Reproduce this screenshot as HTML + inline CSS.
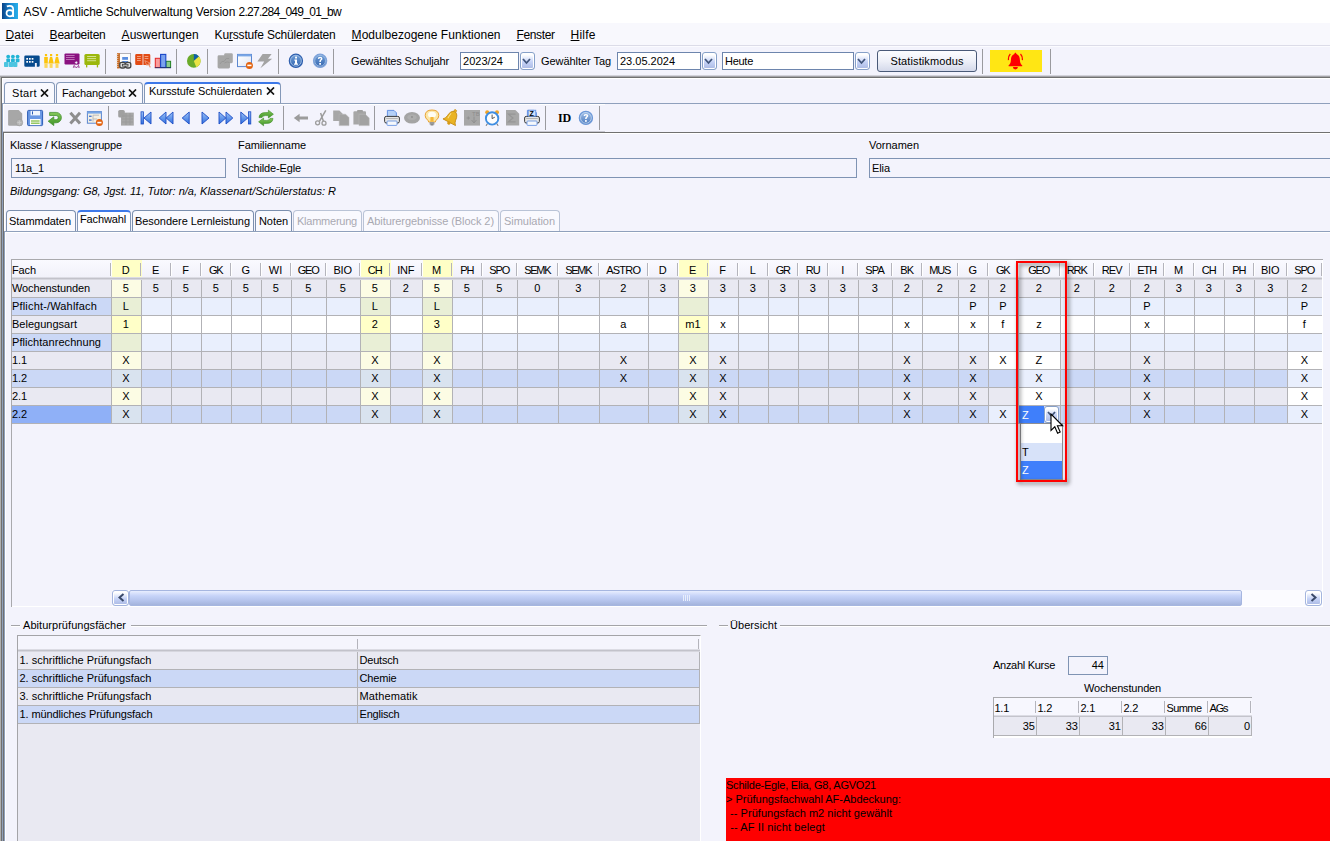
<!DOCTYPE html>
<html lang="de"><head><meta charset="utf-8"><title>ASV - Amtliche Schulverwaltung</title>
<style>

html,body{margin:0;padding:0}
body{width:1330px;height:841px;overflow:hidden;position:relative;background:#f3f3fc;font-family:"Liberation Sans",sans-serif;font-size:11px;color:#000}
div,span.t,svg{position:absolute;box-sizing:border-box}
span.t{white-space:pre;line-height:16px;height:16px}
.tab{border:1px solid #8498b8;border-bottom:none;border-radius:4px 4px 0 0;background:#f9f9fe}
.fld{border:1px solid #7f93b3;background:#f3f3fc}
.cb{border:1px solid #6d85ad;background:#fff}
.cbb{border:1px solid #86a0c8;border-radius:3px;background:linear-gradient(#fff 12%,#c6d3f7 55%,#aab9e3);box-shadow:inset 0 0 0 1px #fff}
.sep{width:1px;background:#9a9a9e}
</style></head>
<body>
<div style="left:0px;top:0px;width:1330px;height:23px;background:#fff"></div>
<svg style="left:2px;top:3px" width="16" height="16" viewBox="0 0 16 16"><defs><linearGradient id="lg0" x1="0" y1="0" x2="1" y2="0"><stop offset="0" stop-color="#0a4488"/><stop offset="0.55" stop-color="#1b8ad2"/><stop offset="1" stop-color="#27b0ea"/></linearGradient></defs><rect width="16" height="16" fill="url(#lg0)"/><path d="M4.8 3.4 Q6 2.9 7.8 2.9 Q11.2 2.9 11.2 6.4 V13.9" fill="none" stroke="#fff" stroke-width="1.7"/><ellipse cx="7.8" cy="10.3" rx="3.3" ry="3.1" fill="none" stroke="#fff" stroke-width="1.7"/></svg>
<span class="t" style="left:23.5px;top:3.84px;font-size:12px;letter-spacing:-0.080px;">ASV - Amtliche Schulverwaltung Version </span>
<span class="t" style="left:238.5px;top:3.84px;font-size:12px;letter-spacing:-0.720px;">2.27.284_049_01_bw</span>
<div style="left:0px;top:23px;width:1330px;height:23px;background:#f8f8fd"></div>
<span class="t" style="left:5.6px;top:26.84px;font-size:12px;letter-spacing:-0.006px;"><u>D</u>atei</span>
<span class="t" style="left:49.6px;top:26.84px;font-size:12px;letter-spacing:-0.206px;"><u>B</u>earbeiten</span>
<span class="t" style="left:121.6px;top:26.84px;font-size:12px;letter-spacing:0.022px;"><u>A</u>uswertungen</span>
<span class="t" style="left:214.6px;top:26.84px;font-size:12px;letter-spacing:-0.171px;">Ku<u>r</u>sstufe Schülerdaten</span>
<span class="t" style="left:351.6px;top:26.84px;font-size:12px;letter-spacing:0.036px;"><u>M</u>odulbezogene Funktionen</span>
<span class="t" style="left:516.6px;top:26.84px;font-size:12px;letter-spacing:-0.386px;"><u>F</u>enster</span>
<span class="t" style="left:570.6px;top:26.84px;font-size:12px;letter-spacing:0.197px;"><u>H</u>ilfe</span>
<div style="left:0px;top:46px;width:1330px;height:29px;background:#f3f3fc;border-top:1px solid #fbfbff"></div>
<div style="left:0px;top:45px;width:1330px;height:1px;background:#dcdce8"></div>
<div style="left:0px;top:75px;width:1330px;height:1px;background:#d2d2da"></div>
<div style="left:0px;top:76px;width:1330px;height:1px;background:#a4a4a8"></div>
<div style="left:0px;top:77px;width:1330px;height:764px;background:#f3f3fc"></div>
<div style="left:0px;top:77px;width:1px;height:764px;background:#b0b0b0"></div>
<div style="left:1px;top:77px;width:1329px;height:1px;background:#707070"></div>
<div style="left:1px;top:77px;width:1px;height:764px;background:#707070"></div>
<div style="left:2px;top:78px;width:1328px;height:1px;background:#fff"></div>
<div style="left:2px;top:78px;width:1px;height:25px;background:#fff"></div>
<div class="sep" style="left:105px;top:49px;height:25px"></div>
<div class="sep" style="left:176px;top:49px;height:25px"></div>
<div class="sep" style="left:207px;top:49px;height:25px"></div>
<div class="sep" style="left:278px;top:49px;height:25px"></div>
<div class="sep" style="left:333px;top:49px;height:25px"></div>
<div class="sep" style="left:982px;top:49px;height:25px"></div>
<div class="sep" style="left:1050px;top:49px;height:25px"></div>
<span class="t" style="left:351px;top:53.19px;font-size:11px;letter-spacing:-0.152px;">Gewähltes Schuljahr</span>
<span class="t" style="left:541px;top:53.19px;font-size:11px;letter-spacing:-0.056px;">Gewählter Tag</span>
<div class="cb" style="left:460px;top:52px;width:59px;height:18px"></div>
<div class="cbb" style="left:520px;top:52px;width:15px;height:18px"></div>
<svg style="left:522px;top:58px" width="9" height="7" viewBox="0 0 9 7"><path d="M1 1 L4.5 5 L8 1" fill="none" stroke="#41557a" stroke-width="1.8"/></svg>
<span class="t" style="left:463px;top:53.19px;font-size:11px;letter-spacing:0.033px;">2023/24</span>
<div class="cb" style="left:617px;top:52px;width:84px;height:18px"></div>
<div class="cbb" style="left:702px;top:52px;width:15px;height:18px"></div>
<svg style="left:704px;top:58px" width="9" height="7" viewBox="0 0 9 7"><path d="M1 1 L4.5 5 L8 1" fill="none" stroke="#41557a" stroke-width="1.8"/></svg>
<span class="t" style="left:620px;top:53.19px;font-size:11px;letter-spacing:-0.006px;">23.05.2024</span>
<div class="cb" style="left:722px;top:52px;width:132px;height:18px"></div>
<div class="cbb" style="left:855px;top:52px;width:15px;height:18px"></div>
<svg style="left:857px;top:58px" width="9" height="7" viewBox="0 0 9 7"><path d="M1 1 L4.5 5 L8 1" fill="none" stroke="#41557a" stroke-width="1.8"/></svg>
<span class="t" style="left:725px;top:53.19px;font-size:11px;letter-spacing:-0.272px;">Heute</span>
<div style="left:877px;top:50px;width:100px;height:22px;border:1px solid #4a5a78;border-radius:3px;background:linear-gradient(#fdfdff,#eef0f8 50%,#d4d9ea)"></div>
<span class="t" style="left:927px;top:53.19px;font-size:11px;letter-spacing:0.105px;transform:translateX(-50%);">Statistikmodus</span>
<div style="left:990px;top:50px;width:52px;height:22px;background:#ffe614"></div>
<svg style="left:1004px;top:50px" width="24" height="22" viewBox="1004 50 24 22"><path d="M1015.4 52.8 C1015.9 52.8 1016.3 53.3 1016.4 54 C1019 54.8 1019.8 57.5 1019.9 60 C1020 63 1020.8 64.2 1022.2 65.2 V66.3 H1008.6 V65.2 C1010 64.2 1010.8 63 1010.9 60 C1011 57.5 1011.8 54.8 1014.4 54 C1014.5 53.3 1014.9 52.8 1015.4 52.8 Z M1012.9 67.1 H1017.9 A2.5 2.3 0 0 1 1012.9 67.1 Z" fill="#fe0000"/><path d="M1010.3 54 Q1008 56.6 1008.5 60.2 M1020.5 54 Q1022.8 56.6 1022.3 60.2" fill="none" stroke="#fe0000" stroke-width="1.2"/></svg>
<svg style="left:0;top:46px" width="345" height="30" viewBox="0 46 345 30"><defs><linearGradient id="gi" x1="0" y1="0" x2="0" y2="1"><stop offset="0" stop-color="#6f9fd8"/><stop offset="1" stop-color="#3464ae"/></linearGradient><linearGradient id="gw" x1="0" y1="0" x2="1" y2="1"><stop offset="0" stop-color="#fff"/><stop offset="1" stop-color="#dfe6f4"/></linearGradient></defs><g fill="#22b4d6"><circle cx="8.2" cy="56.6" r="1.9"/><rect x="6.299999999999999" y="58.6" width="3.8" height="3.6" rx="1"/><circle cx="12.9" cy="56.6" r="1.9"/><rect x="11.0" y="58.6" width="3.8" height="3.6" rx="1"/><circle cx="17.6" cy="56.6" r="1.9"/><rect x="15.700000000000001" y="58.6" width="3.8" height="3.6" rx="1"/></g><g fill="#4cc4e0"><rect x="4.0" y="62" width="4.4" height="5" rx="0.8"/><rect x="8.8" y="62" width="4.4" height="5" rx="0.8"/><rect x="13.0" y="62" width="4.4" height="5" rx="0.8"/></g><path d="M25.6 55.4 H38.4 Q39.7 55.4 39.7 56.7 V65.4 Q39.7 66.7 38.4 66.7 H36.8 V63 H34.9 V66.7 H25.6 Q24.3 66.7 24.3 65.4 V56.7 Q24.3 55.4 25.6 55.4 Z" fill="#064a8e"/><rect x="26.3" y="58" width="1.7" height="1.7" fill="#fff"/><rect x="29" y="58" width="1.7" height="1.7" fill="#fff"/><rect x="31.7" y="58" width="1.7" height="1.7" fill="#fff"/><rect x="26.3" y="61" width="1.7" height="1.7" fill="#fff"/><rect x="29" y="61" width="1.7" height="1.7" fill="#fff"/><rect x="31.7" y="61" width="1.7" height="1.7" fill="#fff"/><g fill="#fcc40a"><rect x="44.9" y="54" width="2.2" height="2.2"/><rect x="50.0" y="54" width="2.2" height="2.2"/><rect x="55.9" y="54" width="2.2" height="2.2"/><rect x="44.2" y="57" width="3.6" height="6.5"/><path d="M50 57 H52.2 L53.8 63.6 H48.4 Z"/><path d="M55.9 57 H58.1 L59.7 63.6 H54.3 Z"/></g><g fill="#fbd65c"><rect x="44.4" y="63.5" width="3.2" height="4.4"/><rect x="49.6" y="63.6" width="3" height="4.3"/><rect x="55.5" y="63.6" width="3" height="4.3"/></g><rect x="64.5" y="53.4" width="15" height="11" rx="1.2" fill="#8a1180"/><rect x="66" y="55.15" width="8.6" height="0.8" fill="#c98bc4"/><rect x="66" y="57.15" width="8.6" height="0.8" fill="#c98bc4"/><rect x="66" y="59.15" width="8.6" height="0.8" fill="#c98bc4"/><circle cx="76.3" cy="62.6" r="1.6" fill="#f3f3fc" stroke="#8a1180" stroke-width="0.9"/><path d="M74.6 64.5 L73.3 67.4 L75.3 66.6 L76.3 68 L77.2 66.6 L79.3 67.4 L78 64.5" fill="none" stroke="#9a3a92" stroke-width="0.9"/><rect x="84.4" y="53.9" width="15.3" height="11" rx="1.5" fill="#9bb70c"/><rect x="86" y="64" width="1.3" height="3.4" fill="#9bb70c"/><rect x="96.8" y="64" width="1.3" height="3.4" fill="#9bb70c"/><rect x="87.1" y="56.1" width="9" height="0.9" fill="#dbe6a0"/><rect x="87.1" y="58.2" width="9" height="0.9" fill="#dbe6a0"/><rect x="87.1" y="60.300000000000004" width="9" height="0.9" fill="#dbe6a0"/><rect x="119.6" y="53.4" width="11" height="12.6" fill="#fdfdfd" stroke="#a0a0a8" stroke-width="0.8"/><rect x="117" y="53.2" width="2.8" height="15.2" fill="#c8641a"/><rect x="116.2" y="54.3" width="2.2" height="0.8" fill="#e8e0d8"/><rect x="116.2" y="56.3" width="2.2" height="0.8" fill="#e8e0d8"/><rect x="116.2" y="58.3" width="2.2" height="0.8" fill="#e8e0d8"/><rect x="116.2" y="60.3" width="2.2" height="0.8" fill="#e8e0d8"/><rect x="116.2" y="62.3" width="2.2" height="0.8" fill="#e8e0d8"/><rect x="116.2" y="64.3" width="2.2" height="0.8" fill="#e8e0d8"/><rect x="116.2" y="66.3" width="2.2" height="0.8" fill="#e8e0d8"/><rect x="122.2" y="57" width="5.8" height="2.8" fill="#5a8ee0"/><rect x="122.2" y="61" width="5.8" height="2" fill="#5a8ee0"/><rect x="119.8" y="62.4" width="5.6" height="5.6" rx="2" fill="#e4e4e4" stroke="#444" stroke-width="1.3"/><rect x="125.4" y="62.4" width="5.4" height="5.6" rx="2" fill="#e4e4e4" stroke="#444" stroke-width="1.3"/><rect x="122.4" y="64.3" width="5.6" height="1.8" fill="#eee" stroke="#444" stroke-width="0.9"/><path d="M136.5 54 H142.6 V65 H136.5 Q135.2 65 135.2 63.7 V55.3 Q135.2 54 136.5 54 Z M143.4 54 H149 Q150.3 54 150.3 55.3 V63.7 Q150.3 65 149 65 H143.4 Z" fill="#e24a14"/><rect x="137" y="56.0" width="3.8" height="0.9" fill="#f4a888"/><rect x="137" y="58.0" width="3.8" height="0.9" fill="#f4a888"/><rect x="137" y="60.0" width="3.8" height="0.9" fill="#f4a888"/><rect x="144.6" y="56.0" width="3.8" height="0.9" fill="#f4a888"/><rect x="144.6" y="58.0" width="3.8" height="0.9" fill="#f4a888"/><path d="M144.8 60.6 L147 66 L147.9 64.2 L150 67.6 L150.6 67 L148.7 63.6 L150.2 63.2 Z" fill="#e24a14" stroke="#f3d0c0" stroke-width="0.5"/><rect x="155.3" y="58.3" width="5" height="9.2" fill="#fa9c9c" stroke="#e22626" stroke-width="1"/><rect x="166" y="61.3" width="4.6" height="6.2" fill="#8ccc8c" stroke="#238223" stroke-width="1"/><rect x="160.6" y="54.4" width="5.2" height="13.1" fill="#7aa2ee" stroke="#1846c8" stroke-width="1.1"/><rect x="154.8" y="67.3" width="16.2" height="0.9" fill="#222a6a"/><circle cx="193.8" cy="60.9" r="6.8" fill="#6aaa2a"/><path d="M193.8 60.9 L193.8 54.1 A6.8 6.8 0 0 1 198.9 56.4 Z" fill="#0e5fa8"/><path d="M193.8 60.9 L198.9 56.4 A6.8 6.8 0 0 1 196.3 67.2 Z" fill="#e9e244"/><rect x="224.2" y="53.2" width="8.6" height="10" rx="1.4" fill="#a9a9a9"/><rect x="217.6" y="55.3" width="12.4" height="13.2" rx="1.4" fill="#a6a6a6"/><path d="M220 64 Q222 60 224 61.5 Q226 57 229 58.5 M224.5 63 Q227 61 229.5 62.5" fill="none" stroke="#969696" stroke-width="0.9"/><rect x="237.5" y="54.4" width="14" height="12.2" fill="url(#gw)" stroke="#5a86d0" stroke-width="1"/><rect x="237.5" y="54.4" width="14" height="2" fill="#78a6e6"/><circle cx="249.4" cy="65.4" r="3.5" fill="#e2620e"/><rect x="247.3" y="64.6" width="4.2" height="1.6" fill="#fff"/><path d="M262.6 54 H271.6 L268 58.8 H272.2 L260.4 68.2 L264.2 61.6 H257.4 Z" fill="#a3a3a3"/><circle cx="295.9" cy="60.8" r="6.6" fill="url(#gi)" stroke="#2f5fae" stroke-width="1.2"/><circle cx="295.9" cy="60.8" r="5.4" fill="none" stroke="#a9c6e8" stroke-width="0.8"/><circle cx="320.1" cy="60.8" r="6.6" fill="url(#gi)" stroke="#7ea2da" stroke-width="1.2"/><circle cx="320.1" cy="60.8" r="5.4" fill="none" stroke="#a9c6e8" stroke-width="0.8"/><rect x="295.1" y="56.6" width="1.9" height="1.9" fill="#fff"/><path d="M294.4 59.6 H297 V63.6 H298 V64.8 H294 V63.6 H295 V60.8 H294.4 Z" fill="#fff"/><path d="M317.8 58.8 Q317.8 56.8 320.1 56.8 Q322.5 56.8 322.5 58.7 Q322.5 59.8 321.2 60.6 Q320.9 60.9 320.9 62 H319.3 Q319.2 60.5 320 59.9 Q320.9 59.3 320.9 58.7 Q320.9 58.1 320.1 58.1 Q319.3 58.1 319.3 58.9 Z" fill="#fff"/><rect x="319.2" y="63" width="1.8" height="1.7" fill="#fff"/></svg>
<div class="tab" style="left:4px;top:82px;width:51px;height:22px"></div>
<div class="tab" style="left:56px;top:82px;width:87px;height:22px"></div>
<div class="tab" style="left:144px;top:82px;width:137px;height:21px;background:#fdfdff;border-top:2px solid #3d78e8"></div>
<div style="left:2px;top:103px;width:1328px;height:1px;background:#8fa0bc"></div>
<div style="left:2px;top:103px;width:1px;height:738px;background:#8fa0bc"></div>
<span class="t" style="left:12px;top:85.19px;font-size:11px;letter-spacing:0.353px;">Start</span>
<span class="t" style="left:62px;top:85.19px;font-size:11px;letter-spacing:-0.111px;">Fachangebot</span>
<span class="t" style="left:149px;top:83.19px;font-size:11px;letter-spacing:-0.062px;">Kursstufe Schülerdaten</span>
<svg style="left:40px;top:89px" width="9" height="8" viewBox="0 0 9 8"><path d="M1 0.5 L8 7.5 M8 0.5 L1 7.5" stroke="#111" stroke-width="1.7" fill="none"/></svg>
<svg style="left:128px;top:89px" width="9" height="8" viewBox="0 0 9 8"><path d="M1 0.5 L8 7.5 M8 0.5 L1 7.5" stroke="#111" stroke-width="1.7" fill="none"/></svg>
<svg style="left:266px;top:87px" width="9" height="8" viewBox="0 0 9 8"><path d="M1 0.5 L8 7.5 M8 0.5 L1 7.5" stroke="#111" stroke-width="1.7" fill="none"/></svg>
<div style="left:3px;top:104px;width:602px;height:1px;background:#fff"></div>
<div style="left:3px;top:104px;width:1px;height:28px;background:#fff"></div>
<div class="sep" style="left:108px;top:106px;height:24px"></div>
<div class="sep" style="left:283px;top:106px;height:24px"></div>
<div class="sep" style="left:374px;top:106px;height:24px"></div>
<div class="sep" style="left:545px;top:106px;height:24px"></div>
<div class="sep" style="left:599px;top:106px;height:24px"></div>
<div style="left:3px;top:131px;width:602px;height:1px;background:#c9c9d2"></div>
<div style="left:3px;top:132px;width:1327px;height:1px;background:#707070"></div>
<div style="left:3px;top:132px;width:1px;height:709px;background:#707070"></div>
<div style="left:4px;top:133px;width:1326px;height:1px;background:#fff"></div>
<div style="left:4px;top:133px;width:1px;height:98px;background:#fff"></div>
<svg style="left:0;top:104px" width="610" height="28" viewBox="0 104 610 28"><defs><linearGradient id="gb" x1="0" y1="0" x2="0" y2="1"><stop offset="0" stop-color="#9cc2f6"/><stop offset="1" stop-color="#2f6fe0"/></linearGradient><linearGradient id="gh" x1="0" y1="0" x2="0" y2="1"><stop offset="0" stop-color="#a4c2ea"/><stop offset="1" stop-color="#4a7abe"/></linearGradient><linearGradient id="gg" x1="0" y1="0" x2="0" y2="1"><stop offset="0" stop-color="#86c85a"/><stop offset="1" stop-color="#3e9426"/></linearGradient></defs><path d="M9.3 110 H18.6 L22.2 113.6 V124.6 Q22.2 125.8 21 125.8 H9.3 Q8.1 125.8 8.1 124.6 V111.2 Q8.1 110 9.3 110 Z" fill="#a7a7a7"/><circle cx="19.4" cy="122.6" r="3.3" fill="#b4b4b4" stroke="#9a9a9a" stroke-width="0.6"/><path d="M17.4 122.6 H21.4 M19.4 120.6 V124.6" stroke="#c8c8c8" stroke-width="1"/><rect x="27.6" y="110.4" width="15" height="15.2" rx="1" fill="#6a98e4" stroke="#2c5cb6" stroke-width="1"/><rect x="30.6" y="110.8" width="9.4" height="4.6" fill="#f2f6fd"/><rect x="32" y="111.4" width="1" height="3" fill="#2c5cb6"/><rect x="30" y="119" width="10.6" height="6.2" fill="#fdfdfd"/><rect x="31" y="120.4" width="8.6" height="1.2" fill="#7cba3c"/><rect x="31" y="122.6" width="8.6" height="1.2" fill="#7cba3c"/><path d="M49.6 112.4 H56.2 A5.2 5.2 0 0 1 56.2 122.8 H53.8 V125.6 L48.2 121.2 L53.8 116.8 V119.7 H56.2 A2.1 2.1 0 0 0 56.2 115.5 H49.6 Z" fill="url(#gg)" stroke="#3a8a24" stroke-width="0.7"/><path d="M70.4 112.8 L80 123.4 M80 112.8 L70.4 123.4" stroke="#8e8e8e" stroke-width="3" fill="none"/><rect x="87.4" y="111.6" width="14" height="11.6" fill="#f3efe4" stroke="#5a86d0" stroke-width="1"/><rect x="87.4" y="111.6" width="14" height="2" fill="#78a6e6"/><rect x="89" y="115.6" width="2.6" height="1.4" fill="#4a7ad0"/><rect x="89" y="119.4" width="2.6" height="1.4" fill="#4a7ad0"/><path d="M93 115.2 H99 M93 115.2 V121.6 M93 119 H97" stroke="#b8b8b8" stroke-width="0.9" fill="none"/><circle cx="99.4" cy="122.6" r="3.5" fill="#e2620e"/><rect x="97.3" y="121.8" width="4.2" height="1.6" fill="#fff"/><rect x="121" y="112.6" width="12.8" height="13" fill="#a7a7a7"/><rect x="118.2" y="110" width="6.6" height="7.6" rx="1.6" fill="#a0a0a0"/><path d="M122 116 H133 M122 119 H133 M122 122 H133 M126 113 V125 M130 113 V125" stroke="#989898" stroke-width="0.7"/><rect x="141" y="111.8" width="2.4" height="12.2" fill="url(#gb)" stroke="#1c4cc4" stroke-width="0.8"/><path d="M151 112 L144 118 L151 124 Z" fill="url(#gb)" stroke="#1c4cc4" stroke-width="0.9" stroke-linejoin="round"/><path d="M166 112 L159.2 118 L166 124 Z" fill="url(#gb)" stroke="#1c4cc4" stroke-width="0.9" stroke-linejoin="round"/><path d="M173 112 L166.2 118 L173 124 Z" fill="url(#gb)" stroke="#1c4cc4" stroke-width="0.9" stroke-linejoin="round"/><path d="M189.2 112 L182.2 118 L189.2 124 Z" fill="url(#gb)" stroke="#1c4cc4" stroke-width="0.9" stroke-linejoin="round"/><path d="M202 112 L209 118.0 L202 124 Z" fill="url(#gb)" stroke="#1c4cc4" stroke-width="0.9" stroke-linejoin="round"/><path d="M219 112 L225.8 118.0 L219 124 Z" fill="url(#gb)" stroke="#1c4cc4" stroke-width="0.9" stroke-linejoin="round"/><path d="M226 112 L232.8 118.0 L226 124 Z" fill="url(#gb)" stroke="#1c4cc4" stroke-width="0.9" stroke-linejoin="round"/><path d="M240.8 112 L247.8 118.0 L240.8 124 Z" fill="url(#gb)" stroke="#1c4cc4" stroke-width="0.9" stroke-linejoin="round"/><rect x="248.4" y="111.8" width="2.4" height="12.2" fill="url(#gb)" stroke="#1c4cc4" stroke-width="0.8"/><path d="M259 117.6 Q259.4 112.6 265.4 112.6 H268.4 V110.2 L273.4 114.2 L268.4 118 V115.6 H265.4 Q262.4 115.6 262 117.6 Z" fill="url(#gg)" stroke="#3a8a24" stroke-width="0.6"/><path d="M273 118.4 Q272.6 123.4 266.6 123.4 H263.6 V125.8 L258.6 121.8 L263.6 118 V120.4 H266.6 Q269.6 120.4 270 118.4 Z" fill="url(#gg)" stroke="#3a8a24" stroke-width="0.6"/><path d="M293.8 118 L299.6 113.8 V116.5 H308 V119.6 H299.6 V122.2 Z" fill="#9c9c9c"/><path d="M325.8 110.4 L319.4 121.4 M320.6 113 L323.4 121.2" stroke="#9c9c9c" stroke-width="1.5" fill="none"/><circle cx="317.6" cy="122.8" r="2" fill="none" stroke="#9c9c9c" stroke-width="1.3"/><circle cx="324" cy="123.2" r="2" fill="none" stroke="#9c9c9c" stroke-width="1.3"/><path d="M333.2 110.6 H339.4 L342.4 113.6 V121 H333.2 Z" fill="#a7a7a7"/><path d="M339.2 114.2 H345.6 L349 117.6 V125.6 H339.2 Z" fill="#a2a2a2" stroke="#b6b6b6" stroke-width="0.5"/><path d="M354.6 111.2 H365 Q366 111.2 366 112.2 V124.6 H353.4 V112.4 Q353.4 111.2 354.6 111.2 Z" fill="#a7a7a7"/><rect x="357" y="109.9" width="6" height="2.6" rx="1" fill="#a0a0a0"/><path d="M359 114.4 H365.6 L369.2 118 V125.6 H359 Z" fill="#a2a2a2" stroke="#b8b8b8" stroke-width="0.5"/><path d="M387.4 110.4 H394 L396.4 112.8 V117 H387.4 Z" fill="#b4d0f8" stroke="#5a8ae0" stroke-width="0.9"/><rect x="384.6" y="116.4" width="14.8" height="6.6" rx="1.6" fill="#e6e6e6" stroke="#3c3c3c" stroke-width="1"/><rect x="387" y="121" width="10" height="4.4" rx="0.8" fill="#f6f8fc" stroke="#5a8ae0" stroke-width="0.8"/><rect x="386.2" y="118" width="11.6" height="1" fill="#b4b4b4"/><ellipse cx="412" cy="117.8" rx="8" ry="5.8" fill="#a4a4a4"/><ellipse cx="412" cy="117.2" rx="4.6" ry="2.8" fill="#aeaeae"/><circle cx="412" cy="117" r="0.9" fill="#8e8e8e"/><path d="M432 110 Q438.8 110 438.8 115.6 Q438.8 118.2 436.4 120 Q435.4 120.8 435.4 122 H428.6 Q428.6 120.8 427.6 120 Q425.2 118.2 425.2 115.6 Q425.2 110 432 110 Z" fill="#fbe6a8" stroke="#eaa434" stroke-width="1"/><ellipse cx="432" cy="114.8" rx="4" ry="3" fill="#fffdf4"/><rect x="430.4" y="117" width="3.2" height="4.6" fill="#f6b838"/><rect x="429.6" y="122" width="4.8" height="2.6" fill="#9a9a9a"/><rect x="430.6" y="124.4" width="2.8" height="1" fill="#6a6a6a"/><g transform="rotate(28 451.5 118)"><path d="M451.5 110.6 Q447.2 111.6 446.8 118 Q446.6 121 444.4 122.8 H458.6 Q456.4 121 456.2 118 Q455.8 111.6 451.5 110.6 Z" fill="#eab424" stroke="#c48a12" stroke-width="0.8"/><circle cx="451.5" cy="110" r="1.3" fill="#eab424" stroke="#c48a12" stroke-width="0.6"/><circle cx="451.5" cy="123.6" r="1.7" fill="#d89a18"/><path d="M449 114 Q448.4 117 448.4 120" stroke="#fbe28a" stroke-width="1" fill="none"/></g><rect x="464" y="110" width="16" height="15.6" fill="#a7a7a7"/><text x="472" y="116" font-family="Liberation Sans, sans-serif" font-size="6" fill="#8c8c8c">TB</text><path d="M474 116.6 V122 M471.6 120 L474 123 L476.4 120 M466.6 118 H470 M468.3 116.4 V119.6" stroke="#909090" stroke-width="1" fill="none"/><circle cx="487.2" cy="112.2" r="2" fill="#f0a428"/><circle cx="497" cy="112.2" r="2" fill="#f0a428"/><path d="M487.4 123.8 L486 125.8 M496.8 123.8 L498.2 125.8" stroke="#7a7a7a" stroke-width="1.1"/><circle cx="492.1" cy="118.4" r="6.2" fill="#fdfdfd" stroke="#3f8ee2" stroke-width="1.9"/><path d="M492.1 114.6 V118.6 L494.8 117.2" stroke="#444" stroke-width="0.9" fill="none"/><path d="M506 110 H515.4 L519.2 113.8 V125.6 H506 Z" fill="#a7a7a7"/><path d="M515.6 114.2 H508.4 L513 118 L508.4 121.8 H515.6" stroke="#969696" stroke-width="1.2" fill="none"/><path d="M527.4 110.4 H534 L536.4 112.8 V117 H527.4 Z" fill="#b4d0f8" stroke="#5a8ae0" stroke-width="0.9"/><rect x="524.6" y="116.4" width="14.8" height="6.6" rx="1.6" fill="#e6e6e6" stroke="#3c3c3c" stroke-width="1"/><rect x="527" y="121" width="10" height="4.4" rx="0.8" fill="#f6f8fc" stroke="#5a8ae0" stroke-width="0.8"/><rect x="526.2" y="118" width="11.6" height="1" fill="#b4b4b4"/><rect x="528.2" y="110.2" width="7.6" height="6" fill="#cfe0fb" stroke="#5a8ae0" stroke-width="0.8"/><text x="529.4" y="115.6" font-family="Liberation Sans, sans-serif" font-size="7" font-weight="bold" fill="#000">Z</text><circle cx="585.9" cy="117.9" r="6.6" fill="url(#gh)" stroke="#6c98d8" stroke-width="1.2"/><circle cx="585.9" cy="117.9" r="5.4" fill="none" stroke="#c4d8f0" stroke-width="0.8"/><path d="M583.6 115.9 Q583.6 113.9 585.9 113.9 Q588.3 113.9 588.3 115.8 Q588.3 116.9 587 117.7 Q586.7 118 586.7 119.1 H585.1 Q585 117.6 585.8 117 Q586.7 116.4 586.7 115.8 Q586.7 115.2 585.9 115.2 Q585.1 115.2 585.1 116 Z" fill="#fff"/><rect x="585" y="120.1" width="1.8" height="1.7" fill="#fff"/></svg>
<span class="t" style="left:558px;top:109.84px;font-size:12px;letter-spacing:-0.172px;font-family:'Liberation Serif',serif;font-weight:bold;">ID</span>
<span class="t" style="left:10px;top:137.19px;font-size:11px;letter-spacing:-0.163px;">Klasse / Klassengruppe</span>
<span class="t" style="left:238px;top:137.19px;font-size:11px;letter-spacing:-0.091px;">Familienname</span>
<span class="t" style="left:869px;top:137.19px;font-size:11px;letter-spacing:-0.020px;">Vornamen</span>
<div class="fld" style="left:11px;top:158px;width:215px;height:20px"></div>
<div class="fld" style="left:238px;top:158px;width:619px;height:20px"></div>
<div class="fld" style="left:869px;top:158px;width:470px;height:20px"></div>
<span class="t" style="left:15px;top:160.19px;font-size:11px;letter-spacing:-0.156px;">11a_1</span>
<span class="t" style="left:241px;top:160.19px;font-size:11px;letter-spacing:-0.147px;">Schilde-Egle</span>
<span class="t" style="left:872px;top:160.19px;font-size:11px;letter-spacing:-0.086px;">Elia</span>
<span class="t" style="left:10px;top:183.19px;font-size:11px;letter-spacing:0.008px;font-style:italic;">Bildungsgang: G8, Jgst. 11, Tutor: n/a, Klassenart/Schülerstatus: R</span>
<div class="tab" style="left:6px;top:210px;width:70px;height:22px;border-color:#7b8fae"></div>
<span class="t" style="left:9px;top:213.19px;font-size:11px;letter-spacing:-0.037px;">Stammdaten</span>
<div class="tab" style="left:132px;top:210px;width:122px;height:22px;border-color:#7b8fae"></div>
<span class="t" style="left:135px;top:213.19px;font-size:11px;letter-spacing:-0.055px;">Besondere Lernleistung</span>
<div class="tab" style="left:255px;top:210px;width:37px;height:22px;border-color:#7b8fae"></div>
<span class="t" style="left:259px;top:213.19px;font-size:11px;letter-spacing:-0.072px;">Noten</span>
<div class="tab" style="left:293px;top:210px;width:69px;height:22px;border-color:#b9c3d6"></div>
<span class="t" style="left:297px;top:213.19px;font-size:11px;color:#a9a9b2;letter-spacing:-0.236px;">Klammerung</span>
<div class="tab" style="left:363px;top:210px;width:136px;height:22px;border-color:#b9c3d6"></div>
<span class="t" style="left:367px;top:213.19px;font-size:11px;color:#a9a9b2;letter-spacing:-0.078px;">Abiturergebnisse (Block 2)</span>
<div class="tab" style="left:500px;top:210px;width:60px;height:22px;border-color:#b9c3d6"></div>
<span class="t" style="left:504px;top:213.19px;font-size:11px;color:#a9a9b2;letter-spacing:-0.036px;">Simulation</span>
<div style="left:4px;top:231px;width:1326px;height:1px;background:#8fa0bc"></div>
<div style="left:4px;top:231px;width:1px;height:610px;background:#8fa0bc"></div>
<div style="left:5px;top:232px;width:1325px;height:1px;background:#fff"></div>
<div style="left:5px;top:232px;width:1px;height:609px;background:#fff"></div>
<div class="tab" style="left:77px;top:210px;width:54px;height:21px;background:#fdfdff;border-top:2px solid #3d78e8"></div>
<span class="t" style="left:80px;top:211.19px;font-size:11px;letter-spacing:-0.135px;">Fachwahl</span>
<div style="left:11px;top:259px;width:1312px;height:1px;background:#a9a9ad"></div>
<div style="left:11px;top:259px;width:1px;height:348px;background:#a9a9ad"></div>
<div style="left:12px;top:260px;width:1310px;height:17px;background:linear-gradient(#fafaff,#f1f1fa)"></div>
<div style="left:12px;top:277px;width:1310px;height:1px;background:#dcdce4"></div>
<div style="left:12px;top:278px;width:1310px;height:1px;background:#c2c2ca"></div>
<div style="left:12px;top:279px;width:1310px;height:1px;background:#d6d6de"></div>
<div style="left:12px;top:280px;width:99px;height:17px;background:#e9e9f2"></div>
<div style="left:112px;top:280px;width:1210px;height:17px;background:#e9e9f2"></div>
<div style="left:12px;top:297px;width:1310px;height:1px;background:#b2b2b6"></div>
<span class="t" style="left:12px;top:280.19px;font-size:11px;letter-spacing:-0.101px;">Wochenstunden</span>
<div style="left:12px;top:298px;width:99px;height:17px;background:#cbd8f6"></div>
<div style="left:112px;top:298px;width:1210px;height:17px;background:#e9effd"></div>
<div style="left:12px;top:315px;width:1310px;height:1px;background:#b2b2b6"></div>
<span class="t" style="left:12px;top:298.19px;font-size:11px;letter-spacing:0.169px;">Pflicht-/Wahlfach</span>
<div style="left:12px;top:316px;width:99px;height:17px;background:#e9e9f2"></div>
<div style="left:112px;top:316px;width:1210px;height:17px;background:#fff"></div>
<div style="left:12px;top:333px;width:1310px;height:1px;background:#b2b2b6"></div>
<span class="t" style="left:12px;top:316.19px;font-size:11px;letter-spacing:0.014px;">Belegungsart</span>
<div style="left:12px;top:334px;width:99px;height:17px;background:#cbd8f6"></div>
<div style="left:112px;top:334px;width:1210px;height:17px;background:#e9effd"></div>
<div style="left:12px;top:351px;width:1310px;height:1px;background:#b2b2b6"></div>
<span class="t" style="left:12px;top:334.19px;font-size:11px;letter-spacing:0.055px;">Pflichtanrechnung</span>
<div style="left:12px;top:352px;width:99px;height:17px;background:#e9e9f2"></div>
<div style="left:112px;top:352px;width:1210px;height:17px;background:#e9e9f2"></div>
<div style="left:12px;top:369px;width:1310px;height:1px;background:#b2b2b6"></div>
<span class="t" style="left:12px;top:352.19px;font-size:11px;letter-spacing:-0.099px;">1.1</span>
<div style="left:12px;top:370px;width:99px;height:17px;background:#cbd8f6"></div>
<div style="left:112px;top:370px;width:1210px;height:17px;background:#cbd8f6"></div>
<div style="left:12px;top:387px;width:1310px;height:1px;background:#b2b2b6"></div>
<span class="t" style="left:12px;top:370.19px;font-size:11px;letter-spacing:-0.099px;">1.2</span>
<div style="left:12px;top:388px;width:99px;height:17px;background:#e9e9f2"></div>
<div style="left:112px;top:388px;width:1210px;height:17px;background:#e9e9f2"></div>
<div style="left:12px;top:405px;width:1310px;height:1px;background:#b2b2b6"></div>
<span class="t" style="left:12px;top:388.19px;font-size:11px;letter-spacing:-0.099px;">2.1</span>
<div style="left:12px;top:406px;width:99px;height:17px;background:#8fb0f7"></div>
<div style="left:112px;top:406px;width:1210px;height:17px;background:#cbd8f6"></div>
<div style="left:12px;top:423px;width:1310px;height:1px;background:#b2b2b6"></div>
<span class="t" style="left:12px;top:406.19px;font-size:11px;letter-spacing:-0.099px;">2.2</span>
<span class="t" style="left:12px;top:262.19px;font-size:11px;letter-spacing:-0.117px;">Fach</span>
<div style="left:110px;top:263px;width:1px;height:13px;background:#b4b4bc"></div>
<div style="left:111px;top:263px;width:1px;height:13px;background:#fff"></div>
<div style="left:112px;top:260px;width:30px;height:17px;background:#ffffc6"></div>
<div style="left:112px;top:280px;width:29px;height:17px;background:#fcfce4"></div>
<div style="left:112px;top:298px;width:29px;height:17px;background:#e9efd6"></div>
<div style="left:112px;top:316px;width:29px;height:17px;background:#ffffc8"></div>
<div style="left:112px;top:334px;width:29px;height:17px;background:#e9efd6"></div>
<div style="left:112px;top:352px;width:29px;height:17px;background:#fcfce4"></div>
<div style="left:112px;top:370px;width:29px;height:17px;background:#d9e3ef"></div>
<div style="left:112px;top:388px;width:29px;height:17px;background:#fcfce4"></div>
<div style="left:112px;top:406px;width:29px;height:17px;background:#d9e3ef"></div>
<div style="left:140px;top:263px;width:1px;height:13px;background:#b4b4bc"></div>
<span class="t" style="left:125.7px;top:262.19px;font-size:11px;transform:translateX(-50%);">D</span>
<span class="t" style="left:125.9px;top:280.19px;font-size:11px;transform:translateX(-50%);">5</span>
<span class="t" style="left:125.9px;top:298.19px;font-size:11px;transform:translateX(-50%);">L</span>
<span class="t" style="left:125.9px;top:316.19px;font-size:11px;transform:translateX(-50%);">1</span>
<span class="t" style="left:125.9px;top:352.19px;font-size:11px;transform:translateX(-50%);">X</span>
<span class="t" style="left:125.9px;top:370.19px;font-size:11px;transform:translateX(-50%);">X</span>
<span class="t" style="left:125.9px;top:388.19px;font-size:11px;transform:translateX(-50%);">X</span>
<span class="t" style="left:125.9px;top:406.19px;font-size:11px;transform:translateX(-50%);">X</span>
<div style="left:170px;top:263px;width:1px;height:13px;background:#b4b4bc"></div>
<div style="left:171px;top:263px;width:1px;height:13px;background:#fff"></div>
<span class="t" style="left:155.7px;top:262.19px;font-size:11px;transform:translateX(-50%);">E</span>
<span class="t" style="left:155.9px;top:280.19px;font-size:11px;transform:translateX(-50%);">5</span>
<div style="left:200px;top:263px;width:1px;height:13px;background:#b4b4bc"></div>
<div style="left:201px;top:263px;width:1px;height:13px;background:#fff"></div>
<span class="t" style="left:185.7px;top:262.19px;font-size:11px;transform:translateX(-50%);">F</span>
<span class="t" style="left:185.9px;top:280.19px;font-size:11px;transform:translateX(-50%);">5</span>
<div style="left:230px;top:263px;width:1px;height:13px;background:#b4b4bc"></div>
<div style="left:231px;top:263px;width:1px;height:13px;background:#fff"></div>
<span class="t" style="left:215.7px;top:262.19px;font-size:11px;letter-spacing:-1.203px;transform:translateX(-50%);">GK</span>
<span class="t" style="left:215.9px;top:280.19px;font-size:11px;transform:translateX(-50%);">5</span>
<div style="left:260px;top:263px;width:1px;height:13px;background:#b4b4bc"></div>
<div style="left:261px;top:263px;width:1px;height:13px;background:#fff"></div>
<span class="t" style="left:245.7px;top:262.19px;font-size:11px;transform:translateX(-50%);">G</span>
<span class="t" style="left:245.9px;top:280.19px;font-size:11px;transform:translateX(-50%);">5</span>
<div style="left:290px;top:263px;width:1px;height:13px;background:#b4b4bc"></div>
<div style="left:291px;top:263px;width:1px;height:13px;background:#fff"></div>
<span class="t" style="left:275.7px;top:262.19px;font-size:11px;letter-spacing:0.273px;transform:translateX(-50%);">WI</span>
<span class="t" style="left:275.9px;top:280.19px;font-size:11px;transform:translateX(-50%);">5</span>
<div style="left:325px;top:263px;width:1px;height:13px;background:#b4b4bc"></div>
<div style="left:326px;top:263px;width:1px;height:13px;background:#fff"></div>
<span class="t" style="left:308.2px;top:262.19px;font-size:11px;letter-spacing:-1.151px;transform:translateX(-50%);">GEO</span>
<span class="t" style="left:308.4px;top:280.19px;font-size:11px;transform:translateX(-50%);">5</span>
<div style="left:359px;top:263px;width:1px;height:13px;background:#b4b4bc"></div>
<div style="left:360px;top:263px;width:1px;height:13px;background:#fff"></div>
<span class="t" style="left:342.7px;top:262.19px;font-size:11px;letter-spacing:-0.151px;transform:translateX(-50%);">BIO</span>
<span class="t" style="left:342.9px;top:280.19px;font-size:11px;transform:translateX(-50%);">5</span>
<div style="left:361px;top:260px;width:30px;height:17px;background:#ffffc6"></div>
<div style="left:361px;top:280px;width:29px;height:17px;background:#fcfce4"></div>
<div style="left:361px;top:298px;width:29px;height:17px;background:#e9efd6"></div>
<div style="left:361px;top:316px;width:29px;height:17px;background:#ffffc8"></div>
<div style="left:361px;top:334px;width:29px;height:17px;background:#e9efd6"></div>
<div style="left:361px;top:352px;width:29px;height:17px;background:#fcfce4"></div>
<div style="left:361px;top:370px;width:29px;height:17px;background:#d9e3ef"></div>
<div style="left:361px;top:388px;width:29px;height:17px;background:#fcfce4"></div>
<div style="left:361px;top:406px;width:29px;height:17px;background:#d9e3ef"></div>
<div style="left:389px;top:263px;width:1px;height:13px;background:#b4b4bc"></div>
<span class="t" style="left:374.7px;top:262.19px;font-size:11px;letter-spacing:-0.945px;transform:translateX(-50%);">CH</span>
<span class="t" style="left:374.9px;top:280.19px;font-size:11px;transform:translateX(-50%);">5</span>
<span class="t" style="left:374.9px;top:298.19px;font-size:11px;transform:translateX(-50%);">L</span>
<span class="t" style="left:374.9px;top:316.19px;font-size:11px;transform:translateX(-50%);">2</span>
<span class="t" style="left:374.9px;top:352.19px;font-size:11px;transform:translateX(-50%);">X</span>
<span class="t" style="left:374.9px;top:370.19px;font-size:11px;transform:translateX(-50%);">X</span>
<span class="t" style="left:374.9px;top:388.19px;font-size:11px;transform:translateX(-50%);">X</span>
<span class="t" style="left:374.9px;top:406.19px;font-size:11px;transform:translateX(-50%);">X</span>
<div style="left:421px;top:263px;width:1px;height:13px;background:#b4b4bc"></div>
<div style="left:422px;top:263px;width:1px;height:13px;background:#fff"></div>
<span class="t" style="left:405.7px;top:262.19px;font-size:11px;letter-spacing:-0.245px;transform:translateX(-50%);">INF</span>
<span class="t" style="left:405.9px;top:280.19px;font-size:11px;transform:translateX(-50%);">2</span>
<div style="left:423px;top:260px;width:30px;height:17px;background:#ffffc6"></div>
<div style="left:423px;top:280px;width:29px;height:17px;background:#fcfce4"></div>
<div style="left:423px;top:298px;width:29px;height:17px;background:#e9efd6"></div>
<div style="left:423px;top:316px;width:29px;height:17px;background:#ffffc8"></div>
<div style="left:423px;top:334px;width:29px;height:17px;background:#e9efd6"></div>
<div style="left:423px;top:352px;width:29px;height:17px;background:#fcfce4"></div>
<div style="left:423px;top:370px;width:29px;height:17px;background:#d9e3ef"></div>
<div style="left:423px;top:388px;width:29px;height:17px;background:#fcfce4"></div>
<div style="left:423px;top:406px;width:29px;height:17px;background:#d9e3ef"></div>
<div style="left:451px;top:263px;width:1px;height:13px;background:#b4b4bc"></div>
<span class="t" style="left:436.7px;top:262.19px;font-size:11px;transform:translateX(-50%);">M</span>
<span class="t" style="left:436.9px;top:280.19px;font-size:11px;transform:translateX(-50%);">5</span>
<span class="t" style="left:436.9px;top:298.19px;font-size:11px;transform:translateX(-50%);">L</span>
<span class="t" style="left:436.9px;top:316.19px;font-size:11px;transform:translateX(-50%);">3</span>
<span class="t" style="left:436.9px;top:352.19px;font-size:11px;transform:translateX(-50%);">X</span>
<span class="t" style="left:436.9px;top:370.19px;font-size:11px;transform:translateX(-50%);">X</span>
<span class="t" style="left:436.9px;top:388.19px;font-size:11px;transform:translateX(-50%);">X</span>
<span class="t" style="left:436.9px;top:406.19px;font-size:11px;transform:translateX(-50%);">X</span>
<div style="left:481px;top:263px;width:1px;height:13px;background:#b4b4bc"></div>
<div style="left:482px;top:263px;width:1px;height:13px;background:#fff"></div>
<span class="t" style="left:466.7px;top:262.19px;font-size:11px;letter-spacing:-1.141px;transform:translateX(-50%);">PH</span>
<span class="t" style="left:466.9px;top:280.19px;font-size:11px;transform:translateX(-50%);">5</span>
<div style="left:516px;top:263px;width:1px;height:13px;background:#b4b4bc"></div>
<div style="left:517px;top:263px;width:1px;height:13px;background:#fff"></div>
<span class="t" style="left:499.2px;top:262.19px;font-size:11px;letter-spacing:-1.078px;transform:translateX(-50%);">SPO</span>
<span class="t" style="left:499.4px;top:280.19px;font-size:11px;transform:translateX(-50%);">5</span>
<div style="left:557px;top:263px;width:1px;height:13px;background:#b4b4bc"></div>
<div style="left:558px;top:263px;width:1px;height:13px;background:#fff"></div>
<span class="t" style="left:537.2px;top:262.19px;font-size:11px;letter-spacing:-1.297px;transform:translateX(-50%);">SEMK</span>
<span class="t" style="left:537.4px;top:280.19px;font-size:11px;transform:translateX(-50%);">0</span>
<div style="left:598px;top:263px;width:1px;height:13px;background:#b4b4bc"></div>
<div style="left:599px;top:263px;width:1px;height:13px;background:#fff"></div>
<span class="t" style="left:578.2px;top:262.19px;font-size:11px;letter-spacing:-1.297px;transform:translateX(-50%);">SEMK</span>
<span class="t" style="left:578.4px;top:280.19px;font-size:11px;transform:translateX(-50%);">3</span>
<div style="left:647px;top:263px;width:1px;height:13px;background:#b4b4bc"></div>
<div style="left:648px;top:263px;width:1px;height:13px;background:#fff"></div>
<span class="t" style="left:623.2px;top:262.19px;font-size:11px;letter-spacing:-0.781px;transform:translateX(-50%);">ASTRO</span>
<span class="t" style="left:623.4px;top:280.19px;font-size:11px;transform:translateX(-50%);">2</span>
<span class="t" style="left:623.4px;top:316.19px;font-size:11px;transform:translateX(-50%);">a</span>
<span class="t" style="left:623.4px;top:352.19px;font-size:11px;transform:translateX(-50%);">X</span>
<span class="t" style="left:623.4px;top:370.19px;font-size:11px;transform:translateX(-50%);">X</span>
<div style="left:677px;top:263px;width:1px;height:13px;background:#b4b4bc"></div>
<div style="left:678px;top:263px;width:1px;height:13px;background:#fff"></div>
<span class="t" style="left:662.7px;top:262.19px;font-size:11px;transform:translateX(-50%);">D</span>
<span class="t" style="left:662.9px;top:280.19px;font-size:11px;transform:translateX(-50%);">3</span>
<div style="left:679px;top:260px;width:30px;height:17px;background:#ffffc6"></div>
<div style="left:679px;top:280px;width:29px;height:17px;background:#fcfce4"></div>
<div style="left:679px;top:298px;width:29px;height:17px;background:#e9efd6"></div>
<div style="left:679px;top:316px;width:29px;height:17px;background:#ffffc8"></div>
<div style="left:679px;top:334px;width:29px;height:17px;background:#e9efd6"></div>
<div style="left:679px;top:352px;width:29px;height:17px;background:#fcfce4"></div>
<div style="left:679px;top:370px;width:29px;height:17px;background:#d9e3ef"></div>
<div style="left:679px;top:388px;width:29px;height:17px;background:#fcfce4"></div>
<div style="left:679px;top:406px;width:29px;height:17px;background:#d9e3ef"></div>
<div style="left:707px;top:263px;width:1px;height:13px;background:#b4b4bc"></div>
<span class="t" style="left:692.7px;top:262.19px;font-size:11px;transform:translateX(-50%);">E</span>
<span class="t" style="left:692.9px;top:280.19px;font-size:11px;transform:translateX(-50%);">3</span>
<span class="t" style="left:692.9px;top:316.19px;font-size:11px;transform:translateX(-50%);">m1</span>
<span class="t" style="left:692.9px;top:352.19px;font-size:11px;transform:translateX(-50%);">X</span>
<span class="t" style="left:692.9px;top:370.19px;font-size:11px;transform:translateX(-50%);">X</span>
<span class="t" style="left:692.9px;top:388.19px;font-size:11px;transform:translateX(-50%);">X</span>
<span class="t" style="left:692.9px;top:406.19px;font-size:11px;transform:translateX(-50%);">X</span>
<div style="left:737px;top:263px;width:1px;height:13px;background:#b4b4bc"></div>
<div style="left:738px;top:263px;width:1px;height:13px;background:#fff"></div>
<span class="t" style="left:722.7px;top:262.19px;font-size:11px;transform:translateX(-50%);">F</span>
<span class="t" style="left:722.9px;top:280.19px;font-size:11px;transform:translateX(-50%);">3</span>
<span class="t" style="left:722.9px;top:316.19px;font-size:11px;transform:translateX(-50%);">x</span>
<span class="t" style="left:722.9px;top:352.19px;font-size:11px;transform:translateX(-50%);">X</span>
<span class="t" style="left:722.9px;top:370.19px;font-size:11px;transform:translateX(-50%);">X</span>
<span class="t" style="left:722.9px;top:388.19px;font-size:11px;transform:translateX(-50%);">X</span>
<span class="t" style="left:722.9px;top:406.19px;font-size:11px;transform:translateX(-50%);">X</span>
<div style="left:767px;top:263px;width:1px;height:13px;background:#b4b4bc"></div>
<div style="left:768px;top:263px;width:1px;height:13px;background:#fff"></div>
<span class="t" style="left:752.7px;top:262.19px;font-size:11px;transform:translateX(-50%);">L</span>
<span class="t" style="left:752.9px;top:280.19px;font-size:11px;transform:translateX(-50%);">3</span>
<div style="left:797px;top:263px;width:1px;height:13px;background:#b4b4bc"></div>
<div style="left:798px;top:263px;width:1px;height:13px;background:#fff"></div>
<span class="t" style="left:782.7px;top:262.19px;font-size:11px;letter-spacing:-1.250px;transform:translateX(-50%);">GR</span>
<span class="t" style="left:782.9px;top:280.19px;font-size:11px;transform:translateX(-50%);">3</span>
<div style="left:827px;top:263px;width:1px;height:13px;background:#b4b4bc"></div>
<div style="left:828px;top:263px;width:1px;height:13px;background:#fff"></div>
<span class="t" style="left:812.7px;top:262.19px;font-size:11px;letter-spacing:-0.945px;transform:translateX(-50%);">RU</span>
<span class="t" style="left:812.9px;top:280.19px;font-size:11px;transform:translateX(-50%);">3</span>
<div style="left:857px;top:263px;width:1px;height:13px;background:#b4b4bc"></div>
<div style="left:858px;top:263px;width:1px;height:13px;background:#fff"></div>
<span class="t" style="left:842.7px;top:262.19px;font-size:11px;transform:translateX(-50%);">I</span>
<span class="t" style="left:842.9px;top:280.19px;font-size:11px;transform:translateX(-50%);">3</span>
<div style="left:891px;top:263px;width:1px;height:13px;background:#b4b4bc"></div>
<div style="left:892px;top:263px;width:1px;height:13px;background:#fff"></div>
<span class="t" style="left:874.7px;top:262.19px;font-size:11px;letter-spacing:-0.734px;transform:translateX(-50%);">SPA</span>
<span class="t" style="left:874.9px;top:280.19px;font-size:11px;transform:translateX(-50%);">3</span>
<div style="left:921px;top:263px;width:1px;height:13px;background:#b4b4bc"></div>
<div style="left:922px;top:263px;width:1px;height:13px;background:#fff"></div>
<span class="t" style="left:906.7px;top:262.19px;font-size:11px;letter-spacing:-0.844px;transform:translateX(-50%);">BK</span>
<span class="t" style="left:906.9px;top:280.19px;font-size:11px;transform:translateX(-50%);">2</span>
<span class="t" style="left:906.9px;top:316.19px;font-size:11px;transform:translateX(-50%);">x</span>
<span class="t" style="left:906.9px;top:352.19px;font-size:11px;transform:translateX(-50%);">X</span>
<span class="t" style="left:906.9px;top:370.19px;font-size:11px;transform:translateX(-50%);">X</span>
<span class="t" style="left:906.9px;top:388.19px;font-size:11px;transform:translateX(-50%);">X</span>
<span class="t" style="left:906.9px;top:406.19px;font-size:11px;transform:translateX(-50%);">X</span>
<div style="left:957px;top:263px;width:1px;height:13px;background:#b4b4bc"></div>
<div style="left:958px;top:263px;width:1px;height:13px;background:#fff"></div>
<span class="t" style="left:939.7px;top:262.19px;font-size:11px;letter-spacing:-1.151px;transform:translateX(-50%);">MUS</span>
<span class="t" style="left:939.9px;top:280.19px;font-size:11px;transform:translateX(-50%);">2</span>
<div style="left:987px;top:263px;width:1px;height:13px;background:#b4b4bc"></div>
<div style="left:988px;top:263px;width:1px;height:13px;background:#fff"></div>
<span class="t" style="left:972.7px;top:262.19px;font-size:11px;transform:translateX(-50%);">G</span>
<span class="t" style="left:972.9px;top:280.19px;font-size:11px;transform:translateX(-50%);">2</span>
<span class="t" style="left:972.9px;top:298.19px;font-size:11px;transform:translateX(-50%);">P</span>
<span class="t" style="left:972.9px;top:316.19px;font-size:11px;transform:translateX(-50%);">x</span>
<span class="t" style="left:972.9px;top:352.19px;font-size:11px;transform:translateX(-50%);">X</span>
<span class="t" style="left:972.9px;top:370.19px;font-size:11px;transform:translateX(-50%);">X</span>
<span class="t" style="left:972.9px;top:388.19px;font-size:11px;transform:translateX(-50%);">X</span>
<span class="t" style="left:972.9px;top:406.19px;font-size:11px;transform:translateX(-50%);">X</span>
<div style="left:989px;top:352px;width:29px;height:17px;background:#fff"></div>
<div style="left:989px;top:406px;width:29px;height:17px;background:#e9effd"></div>
<div style="left:1017px;top:263px;width:1px;height:13px;background:#b4b4bc"></div>
<div style="left:1018px;top:263px;width:1px;height:13px;background:#fff"></div>
<span class="t" style="left:1002.7px;top:262.19px;font-size:11px;letter-spacing:-1.203px;transform:translateX(-50%);">GK</span>
<span class="t" style="left:1002.9px;top:280.19px;font-size:11px;transform:translateX(-50%);">2</span>
<span class="t" style="left:1002.9px;top:298.19px;font-size:11px;transform:translateX(-50%);">P</span>
<span class="t" style="left:1002.9px;top:316.19px;font-size:11px;transform:translateX(-50%);">f</span>
<span class="t" style="left:1002.9px;top:352.19px;font-size:11px;transform:translateX(-50%);">X</span>
<span class="t" style="left:1002.9px;top:406.19px;font-size:11px;transform:translateX(-50%);">X</span>
<div style="left:1019px;top:352px;width:41px;height:17px;background:#fff"></div>
<div style="left:1019px;top:370px;width:41px;height:17px;background:#e9effd"></div>
<div style="left:1019px;top:388px;width:41px;height:17px;background:#fff"></div>
<div style="left:1059px;top:263px;width:1px;height:13px;background:#b4b4bc"></div>
<div style="left:1060px;top:263px;width:1px;height:13px;background:#fff"></div>
<span class="t" style="left:1038.7px;top:262.19px;font-size:11px;letter-spacing:-1.151px;transform:translateX(-50%);">GEO</span>
<span class="t" style="left:1038.9px;top:280.19px;font-size:11px;transform:translateX(-50%);">2</span>
<span class="t" style="left:1038.9px;top:316.19px;font-size:11px;transform:translateX(-50%);">z</span>
<span class="t" style="left:1038.9px;top:352.19px;font-size:11px;transform:translateX(-50%);">Z</span>
<span class="t" style="left:1038.9px;top:370.19px;font-size:11px;transform:translateX(-50%);">X</span>
<span class="t" style="left:1038.9px;top:388.19px;font-size:11px;transform:translateX(-50%);">X</span>
<div style="left:1093px;top:263px;width:1px;height:13px;background:#b4b4bc"></div>
<div style="left:1094px;top:263px;width:1px;height:13px;background:#fff"></div>
<span class="t" style="left:1076.7px;top:262.19px;font-size:11px;letter-spacing:-1.078px;transform:translateX(-50%);">RRK</span>
<span class="t" style="left:1076.9px;top:280.19px;font-size:11px;transform:translateX(-50%);">2</span>
<div style="left:1129px;top:263px;width:1px;height:13px;background:#b4b4bc"></div>
<div style="left:1130px;top:263px;width:1px;height:13px;background:#fff"></div>
<span class="t" style="left:1111.7px;top:262.19px;font-size:11px;letter-spacing:-0.875px;transform:translateX(-50%);">REV</span>
<span class="t" style="left:1111.9px;top:280.19px;font-size:11px;transform:translateX(-50%);">2</span>
<div style="left:1163px;top:263px;width:1px;height:13px;background:#b4b4bc"></div>
<div style="left:1164px;top:263px;width:1px;height:13px;background:#fff"></div>
<span class="t" style="left:1146.7px;top:262.19px;font-size:11px;letter-spacing:-1.000px;transform:translateX(-50%);">ETH</span>
<span class="t" style="left:1146.9px;top:280.19px;font-size:11px;transform:translateX(-50%);">2</span>
<span class="t" style="left:1146.9px;top:298.19px;font-size:11px;transform:translateX(-50%);">P</span>
<span class="t" style="left:1146.9px;top:316.19px;font-size:11px;transform:translateX(-50%);">x</span>
<span class="t" style="left:1146.9px;top:352.19px;font-size:11px;transform:translateX(-50%);">X</span>
<span class="t" style="left:1146.9px;top:370.19px;font-size:11px;transform:translateX(-50%);">X</span>
<span class="t" style="left:1146.9px;top:388.19px;font-size:11px;transform:translateX(-50%);">X</span>
<span class="t" style="left:1146.9px;top:406.19px;font-size:11px;transform:translateX(-50%);">X</span>
<div style="left:1193px;top:263px;width:1px;height:13px;background:#b4b4bc"></div>
<div style="left:1194px;top:263px;width:1px;height:13px;background:#fff"></div>
<span class="t" style="left:1178.7px;top:262.19px;font-size:11px;transform:translateX(-50%);">M</span>
<span class="t" style="left:1178.9px;top:280.19px;font-size:11px;transform:translateX(-50%);">3</span>
<div style="left:1223px;top:263px;width:1px;height:13px;background:#b4b4bc"></div>
<div style="left:1224px;top:263px;width:1px;height:13px;background:#fff"></div>
<span class="t" style="left:1208.7px;top:262.19px;font-size:11px;letter-spacing:-0.945px;transform:translateX(-50%);">CH</span>
<span class="t" style="left:1208.9px;top:280.19px;font-size:11px;transform:translateX(-50%);">3</span>
<div style="left:1253px;top:263px;width:1px;height:13px;background:#b4b4bc"></div>
<div style="left:1254px;top:263px;width:1px;height:13px;background:#fff"></div>
<span class="t" style="left:1238.7px;top:262.19px;font-size:11px;letter-spacing:-1.141px;transform:translateX(-50%);">PH</span>
<span class="t" style="left:1238.9px;top:280.19px;font-size:11px;transform:translateX(-50%);">3</span>
<div style="left:1286px;top:263px;width:1px;height:13px;background:#b4b4bc"></div>
<div style="left:1287px;top:263px;width:1px;height:13px;background:#fff"></div>
<span class="t" style="left:1270.2px;top:262.19px;font-size:11px;letter-spacing:-0.151px;transform:translateX(-50%);">BIO</span>
<span class="t" style="left:1270.4px;top:280.19px;font-size:11px;transform:translateX(-50%);">3</span>
<div style="left:1288px;top:352px;width:34px;height:17px;background:#fff"></div>
<div style="left:1288px;top:370px;width:34px;height:17px;background:#e9effd"></div>
<div style="left:1288px;top:388px;width:34px;height:17px;background:#fff"></div>
<div style="left:1288px;top:406px;width:34px;height:17px;background:#e9effd"></div>
<div style="left:1321px;top:263px;width:1px;height:13px;background:#b4b4bc"></div>
<div style="left:1322px;top:263px;width:1px;height:13px;background:#fff"></div>
<span class="t" style="left:1304.2px;top:262.19px;font-size:11px;letter-spacing:-1.078px;transform:translateX(-50%);">SPO</span>
<span class="t" style="left:1304.4px;top:280.19px;font-size:11px;transform:translateX(-50%);">2</span>
<span class="t" style="left:1304.4px;top:298.19px;font-size:11px;transform:translateX(-50%);">P</span>
<span class="t" style="left:1304.4px;top:316.19px;font-size:11px;transform:translateX(-50%);">f</span>
<span class="t" style="left:1304.4px;top:352.19px;font-size:11px;transform:translateX(-50%);">X</span>
<span class="t" style="left:1304.4px;top:370.19px;font-size:11px;transform:translateX(-50%);">X</span>
<span class="t" style="left:1304.4px;top:388.19px;font-size:11px;transform:translateX(-50%);">X</span>
<span class="t" style="left:1304.4px;top:406.19px;font-size:11px;transform:translateX(-50%);">X</span>
<div style="left:111px;top:280px;width:1px;height:144px;background:#b2b2b6"></div>
<div style="left:141px;top:280px;width:1px;height:144px;background:#b2b2b6"></div>
<div style="left:171px;top:280px;width:1px;height:144px;background:#b2b2b6"></div>
<div style="left:201px;top:280px;width:1px;height:144px;background:#b2b2b6"></div>
<div style="left:231px;top:280px;width:1px;height:144px;background:#b2b2b6"></div>
<div style="left:261px;top:280px;width:1px;height:144px;background:#b2b2b6"></div>
<div style="left:291px;top:280px;width:1px;height:144px;background:#b2b2b6"></div>
<div style="left:326px;top:280px;width:1px;height:144px;background:#b2b2b6"></div>
<div style="left:360px;top:280px;width:1px;height:144px;background:#b2b2b6"></div>
<div style="left:390px;top:280px;width:1px;height:144px;background:#b2b2b6"></div>
<div style="left:422px;top:280px;width:1px;height:144px;background:#b2b2b6"></div>
<div style="left:452px;top:280px;width:1px;height:144px;background:#b2b2b6"></div>
<div style="left:482px;top:280px;width:1px;height:144px;background:#b2b2b6"></div>
<div style="left:517px;top:280px;width:1px;height:144px;background:#b2b2b6"></div>
<div style="left:558px;top:280px;width:1px;height:144px;background:#b2b2b6"></div>
<div style="left:599px;top:280px;width:1px;height:144px;background:#b2b2b6"></div>
<div style="left:648px;top:280px;width:1px;height:144px;background:#b2b2b6"></div>
<div style="left:678px;top:280px;width:1px;height:144px;background:#b2b2b6"></div>
<div style="left:708px;top:280px;width:1px;height:144px;background:#b2b2b6"></div>
<div style="left:738px;top:280px;width:1px;height:144px;background:#b2b2b6"></div>
<div style="left:768px;top:280px;width:1px;height:144px;background:#b2b2b6"></div>
<div style="left:798px;top:280px;width:1px;height:144px;background:#b2b2b6"></div>
<div style="left:828px;top:280px;width:1px;height:144px;background:#b2b2b6"></div>
<div style="left:858px;top:280px;width:1px;height:144px;background:#b2b2b6"></div>
<div style="left:892px;top:280px;width:1px;height:144px;background:#b2b2b6"></div>
<div style="left:922px;top:280px;width:1px;height:144px;background:#b2b2b6"></div>
<div style="left:958px;top:280px;width:1px;height:144px;background:#b2b2b6"></div>
<div style="left:988px;top:280px;width:1px;height:144px;background:#b2b2b6"></div>
<div style="left:1018px;top:280px;width:1px;height:144px;background:#b2b2b6"></div>
<div style="left:1060px;top:280px;width:1px;height:144px;background:#b2b2b6"></div>
<div style="left:1094px;top:280px;width:1px;height:144px;background:#b2b2b6"></div>
<div style="left:1130px;top:280px;width:1px;height:144px;background:#b2b2b6"></div>
<div style="left:1164px;top:280px;width:1px;height:144px;background:#b2b2b6"></div>
<div style="left:1194px;top:280px;width:1px;height:144px;background:#b2b2b6"></div>
<div style="left:1224px;top:280px;width:1px;height:144px;background:#b2b2b6"></div>
<div style="left:1254px;top:280px;width:1px;height:144px;background:#b2b2b6"></div>
<div style="left:1287px;top:280px;width:1px;height:144px;background:#b2b2b6"></div>
<div style="left:1322px;top:280px;width:1px;height:144px;background:#b2b2b6"></div>
<div style="left:1322px;top:260px;width:1px;height:347px;background:#fff"></div>
<div style="left:12px;top:606px;width:1311px;height:1px;background:#fff"></div>
<div style="left:1019px;top:406px;width:25px;height:17px;background:#3f7ffb"></div>
<span class="t" style="left:1022px;top:406.69px;font-size:11px;color:#fff;">Z</span>
<div class="cbb" style="left:1044px;top:406px;width:15px;height:17px"></div>
<svg style="left:1047px;top:411px" width="9" height="7" viewBox="0 0 9 7"><path d="M1 1 L4.5 5 L8 1" fill="none" stroke="#41557a" stroke-width="1.8"/></svg>
<div style="left:1020px;top:423px;width:43px;height:57px;background:#fff;border:1px solid #8e8e92"></div>
<div style="left:1021px;top:443px;width:41px;height:18px;background:#d7e2f9"></div>
<div style="left:1021px;top:461px;width:41px;height:18px;background:#3f7ffb"></div>
<span class="t" style="left:1022px;top:444.19px;font-size:11px;">T</span>
<span class="t" style="left:1022px;top:462.19px;font-size:11px;color:#fff;">Z</span>
<div style="left:1016px;top:261px;width:51px;height:221px;border:2px solid #f00;filter:drop-shadow(2px 2px 2px rgba(0,0,0,.6))"></div>
<svg style="left:1049.6px;top:412.6px" width="14" height="22" viewBox="0 0 14 22"><path d="M1 1 V17.5 L4.8 13.8 L7.6 20.2 L10.2 19 L7.4 12.8 H12.6 Z" fill="#fff" stroke="#000" stroke-width="1.1" stroke-linejoin="miter"/></svg>
<div style="left:112px;top:590px;width:1210px;height:16px;background:#fbfbff"></div>
<div class="cbb" style="left:112px;top:590px;width:17px;height:16px;border-color:#a4b5de"></div>
<div class="cbb" style="left:1305px;top:590px;width:17px;height:16px;border-color:#a4b5de"></div>
<svg style="left:118px;top:593px" width="7" height="9" viewBox="0 0 7 9"><path d="M5.5 1 L1.5 4.5 L5.5 8" fill="none" stroke="#3a4a6a" stroke-width="2"/></svg>
<svg style="left:1310px;top:593px" width="7" height="9" viewBox="0 0 7 9"><path d="M1.5 1 L5.5 4.5 L1.5 8" fill="none" stroke="#3a4a6a" stroke-width="2"/></svg>
<div style="left:129px;top:590px;width:1113px;height:16px;border:1px solid #a6b6e0;border-radius:2px;background:linear-gradient(#e8eeff,#c6d3f8 35%,#b4c3ec 70%,#a4b4dc)"></div>
<div style="left:683px;top:595px;width:1px;height:6px;background:#e8eefc"></div>
<div style="left:685px;top:595px;width:1px;height:6px;background:#e8eefc"></div>
<div style="left:687px;top:595px;width:1px;height:6px;background:#e8eefc"></div>
<div style="left:689px;top:595px;width:1px;height:6px;background:#e8eefc"></div>
<div style="left:11px;top:625px;width:9px;height:1px;background:#a4a4a8"></div>
<div style="left:131px;top:625px;width:576px;height:1px;background:#a4a4a8"></div>
<div style="left:11px;top:626px;width:9px;height:1px;background:#fff"></div>
<div style="left:131px;top:626px;width:576px;height:1px;background:#fff"></div>
<span class="t" style="left:23px;top:617.19px;font-size:11px;letter-spacing:0.044px;">Abiturprüfungsfächer</span>
<div style="left:17px;top:635px;width:684px;height:206px;background:#e9e9f2;border-top:1px solid #a4a4a8;border-left:1px solid #a4a4a8;border-right:1px solid #fff"></div>
<div style="left:18px;top:636px;width:682px;height:13px;background:#f5f5fd"></div>
<div style="left:18px;top:649px;width:682px;height:1px;background:#dcdce4"></div>
<div style="left:18px;top:650px;width:682px;height:1px;background:#c2c2ca"></div>
<div style="left:18px;top:651px;width:682px;height:1px;background:#d6d6de"></div>
<div style="left:357px;top:639px;width:1px;height:10px;background:#b4b4bc"></div>
<div style="left:698px;top:639px;width:1px;height:10px;background:#b4b4bc"></div>
<div style="left:18px;top:652px;width:681px;height:17px;background:#e9e9f2"></div>
<div style="left:18px;top:669px;width:682px;height:1px;background:#b2b2b6"></div>
<span class="t" style="left:19.5px;top:652.19px;font-size:11px;letter-spacing:-0.003px;">1. schriftliche Prüfungsfach</span>
<span class="t" style="left:359.5px;top:652.19px;font-size:11px;letter-spacing:-0.194px;">Deutsch</span>
<div style="left:18px;top:670px;width:681px;height:17px;background:#cbd8f6"></div>
<div style="left:18px;top:687px;width:682px;height:1px;background:#b2b2b6"></div>
<span class="t" style="left:19.5px;top:670.19px;font-size:11px;letter-spacing:-0.003px;">2. schriftliche Prüfungsfach</span>
<span class="t" style="left:359.5px;top:670.19px;font-size:11px;letter-spacing:-0.151px;">Chemie</span>
<div style="left:18px;top:688px;width:681px;height:17px;background:#e9e9f2"></div>
<div style="left:18px;top:705px;width:682px;height:1px;background:#b2b2b6"></div>
<span class="t" style="left:19.5px;top:688.19px;font-size:11px;letter-spacing:-0.003px;">3. schriftliche Prüfungsfach</span>
<span class="t" style="left:359.5px;top:688.19px;font-size:11px;letter-spacing:0.114px;">Mathematik</span>
<div style="left:18px;top:706px;width:681px;height:17px;background:#cbd8f6"></div>
<div style="left:18px;top:723px;width:682px;height:1px;background:#b2b2b6"></div>
<span class="t" style="left:19.5px;top:706.19px;font-size:11px;letter-spacing:-0.106px;">1. mündliches Prüfungsfach</span>
<span class="t" style="left:359.5px;top:706.19px;font-size:11px;letter-spacing:-0.197px;">Englisch</span>
<div style="left:357px;top:652px;width:1px;height:72px;background:#b2b2b6"></div>
<div style="left:699px;top:652px;width:1px;height:72px;background:#b2b2b6"></div>
<div style="left:719px;top:625px;width:9px;height:1px;background:#a4a4a8"></div>
<div style="left:780px;top:625px;width:550px;height:1px;background:#a4a4a8"></div>
<div style="left:719px;top:626px;width:9px;height:1px;background:#fff"></div>
<div style="left:780px;top:626px;width:550px;height:1px;background:#fff"></div>
<span class="t" style="left:730px;top:617.19px;font-size:11px;letter-spacing:0.059px;">Übersicht</span>
<span class="t" style="left:993px;top:657.19px;font-size:11px;letter-spacing:-0.286px;">Anzahl Kurse</span>
<div class="fld" style="left:1068px;top:656px;width:40px;height:19px"></div>
<span class="t" style="left:1104px;top:657.19px;font-size:11px;transform:translateX(-100%);">44</span>
<span class="t" style="left:1084px;top:680.19px;font-size:11px;letter-spacing:-0.178px;">Wochenstunden</span>
<div style="left:993px;top:697px;width:259px;height:1px;background:#a9a9ad"></div>
<div style="left:993px;top:698px;width:1px;height:40px;background:#a9a9ad"></div>
<div style="left:994px;top:698px;width:258px;height:17px;background:#f7f7fe"></div>
<div style="left:994px;top:715px;width:258px;height:1px;background:#dcdce4"></div>
<div style="left:994px;top:716px;width:258px;height:1px;background:#c4c4cc"></div>
<div style="left:994px;top:717px;width:258px;height:18px;background:#e9e9f2"></div>
<div style="left:994px;top:735px;width:258px;height:1px;background:#b2b2b6"></div>
<div style="left:994px;top:736px;width:258px;height:2px;background:#fff"></div>
<span class="t" style="left:994.5px;top:699.79px;font-size:11px;letter-spacing:-0.266px;">1.1</span>
<div style="left:1035px;top:701px;width:1px;height:12px;background:#b4b4bc"></div>
<div style="left:1036px;top:717px;width:1px;height:18px;background:#b2b2b6"></div>
<span class="t" style="left:1035px;top:717.79px;font-size:11px;transform:translateX(-100%);">35</span>
<span class="t" style="left:1037.5px;top:699.79px;font-size:11px;letter-spacing:-0.266px;">1.2</span>
<div style="left:1078px;top:701px;width:1px;height:12px;background:#b4b4bc"></div>
<div style="left:1079px;top:717px;width:1px;height:18px;background:#b2b2b6"></div>
<span class="t" style="left:1078px;top:717.79px;font-size:11px;transform:translateX(-100%);">33</span>
<span class="t" style="left:1080.5px;top:699.79px;font-size:11px;letter-spacing:-0.266px;">2.1</span>
<div style="left:1121px;top:701px;width:1px;height:12px;background:#b4b4bc"></div>
<div style="left:1122px;top:717px;width:1px;height:18px;background:#b2b2b6"></div>
<span class="t" style="left:1121px;top:717.79px;font-size:11px;transform:translateX(-100%);">31</span>
<span class="t" style="left:1123.5px;top:699.79px;font-size:11px;letter-spacing:-0.266px;">2.2</span>
<div style="left:1164px;top:701px;width:1px;height:12px;background:#b4b4bc"></div>
<div style="left:1165px;top:717px;width:1px;height:18px;background:#b2b2b6"></div>
<span class="t" style="left:1164px;top:717.79px;font-size:11px;transform:translateX(-100%);">33</span>
<span class="t" style="left:1166.5px;top:699.79px;font-size:11px;letter-spacing:-0.581px;">Summe</span>
<div style="left:1207px;top:701px;width:1px;height:12px;background:#b4b4bc"></div>
<div style="left:1208px;top:717px;width:1px;height:18px;background:#b2b2b6"></div>
<span class="t" style="left:1207px;top:717.79px;font-size:11px;transform:translateX(-100%);">66</span>
<span class="t" style="left:1209.5px;top:699.79px;font-size:11px;letter-spacing:-1.135px;">AGs</span>
<div style="left:1250px;top:701px;width:1px;height:12px;background:#b4b4bc"></div>
<div style="left:1251px;top:717px;width:1px;height:18px;background:#b2b2b6"></div>
<span class="t" style="left:1250px;top:717.79px;font-size:11px;transform:translateX(-100%);">0</span>
<div style="left:726px;top:778px;width:604px;height:63px;background:#fe0000"></div>
<span class="t" style="left:726px;top:777.19px;font-size:11px;letter-spacing:-0.218px;">Schilde-Egle, Elia, G8, AGVO21</span>
<span class="t" style="left:726px;top:791.19px;font-size:11px;letter-spacing:-0.006px;">&gt; Prüfungsfachwahl AF-Abdeckung:</span>
<span class="t" style="left:727px;top:805.19px;font-size:11px;letter-spacing:0.035px;"> -- Prüfungsfach m2 nicht gewählt</span>
<span class="t" style="left:727px;top:819.19px;font-size:11px;letter-spacing:0.119px;"> -- AF II nicht belegt</span>
</body></html>
